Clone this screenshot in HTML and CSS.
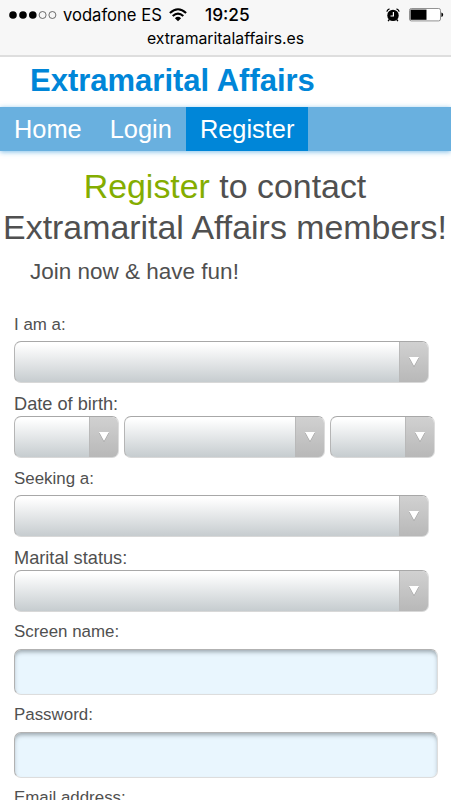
FILE: index.html
```html
<!DOCTYPE html>
<html lang="en">
<head>
<meta charset="utf-8">
<title>Extramarital Affairs</title>
<link rel="stylesheet" href="styles.css">
</head>
<body>
<div class="browser-bar">
  <div class="status">
    <svg class="signal" width="48" height="8" viewBox="0 0 48 8"><g><circle cx="4" cy="4" r="3.8"/><circle cx="14" cy="4" r="3.8"/><circle cx="23.8" cy="4" r="3.8"/></g><g fill="none" stroke="#333" stroke-width=".7"><circle cx="33.6" cy="4" r="3.5"/><circle cx="43.4" cy="4" r="3.5"/></g></svg>
    <span class="carrier">vodafone ES</span>
    <svg class="wifi" width="18" height="14" viewBox="0 0 18 14"><g fill="none" stroke="#000" stroke-width="2.1"><path d="M.9 5.1Q9-2.6 17.1 5.1"/><path d="M3.7 8.1Q9 3.2 14.3 8.1"/></g><path d="M5.9 10.2Q9 7.5 12.1 10.2L9 13.2Z"/></svg>
    <span class="time">19:25</span>
    <svg class="alarm" width="14" height="14" viewBox="0 0 14 14"><circle cx="7" cy="7.4" r="5.7"/><path d="M.8 3.6Q1.4 1.5 3.5.9M10.5.9Q12.6 1.5 13.2 3.6M3.3 11.5l-1.2 1.6M10.7 11.5l1.2 1.6" fill="none" stroke="#000" stroke-width="1.3"/><path d="M7.4 4v4H4.5" fill="none" stroke="#fff" stroke-width="1.2"/></svg>
    <svg class="battery" width="35" height="14" viewBox="0 0 35 14"><rect x=".5" y=".5" width="31" height="12.4" rx="1.8" fill="#fff" stroke="#777" stroke-width=".8"/><path d="M1.5 1.6h16v10.2h-16z"/><path d="M32.4 4.4q1.8.5 1.8 2.3t-1.8 2.3z"/></svg>
  </div>
  <div class="address">extramaritalaffairs.es</div>
</div>
<header class="brand">Extramarital Affairs</header>
<nav class="nav"><a>Home</a><a>Login</a><a class="active">Register</a></nav>
<main>
  <h1><em>Register</em> to contact<br>Extramarital Affairs members!</h1>
  <p class="intro">Join now &amp; have fun!</p>
  <form class="form">
    <div class="field"><label>I am a:</label><div class="select"><i></i></div></div>
    <div class="field tight"><label>Date of birth:</label>
      <div class="date"><div class="select"><i></i></div><div class="select"><i></i></div><div class="select"><i></i></div></div></div>
    <div class="field"><label>Seeking a:</label><div class="select"><i></i></div></div>
    <div class="field tight"><label>Marital status:</label><div class="select"><i></i></div></div>
    <div class="field entry"><label>Screen name:</label><input type="text"></div>
    <div class="field entry"><label>Password:</label><input type="password"></div>
    <div class="field"><label>Email address:</label></div>
  </form>
</main>
</body>
</html>
```
FILE: styles.css
```css
* { box-sizing: border-box; }
html { height: 800px; overflow: hidden; }
body { margin: 0; width: 451px; height: 800px; overflow: hidden; background: #fff; color: #505050; font-family: "Liberation Sans", Arial, sans-serif; }
.browser-bar { height: 57px; background: #f7f7f7; border-bottom: 2px solid #dedede; color: #000; font-family: Inter, sans-serif; }
.status { display: flex; align-items: center; height: 29px; padding-left: 9px; white-space: nowrap; }
.status svg { flex: none; }
.carrier { width: 101px; margin-left: 6px; font-size: 16.6px; }
.wifi { margin-left: 5px; }
.time { width: 47px; margin-left: 18px; font-size: 17.3px; font-weight: 500; }
.alarm { margin-left: 134px; }
.battery { margin-left: 9px; }
.address { height: 20px; line-height: 20px; text-align: center; font-size: 15.8px; }
.brand { height: 50px; padding-left: 30px; line-height: 47px; font-size: 31px; font-weight: bold; color: #0086d8; }
.nav { display: flex; height: 44px; background: #69b0df; box-shadow: 0 1px 5px rgba(60, 155, 220, .65); margin-bottom: 15px; }
.nav a { padding: 0 14px; line-height: 44px; font-size: 25.4px; color: #fff; }
.nav .active { background: #0086d8; }
h1 { margin: 0 0 0 -1px; line-height: 41px; font-size: 33.9px; font-weight: normal; text-align: center; white-space: nowrap; }
h1 em { font-style: normal; color: #84ad00; }
.intro { margin: 11px 0 0; padding-left: 30px; line-height: 26px; font-size: 22.5px; }
.form { padding: 30px 14px 0; }
.field label { display: block; height: 26px; line-height: 20px; font-size: 16.9px; white-space: nowrap; }
.field .select { margin-bottom: 11px; }
.field.tight label { height: 22px; font-size: 18.2px; line-height: 21px; }
.field.tight > .select { margin-bottom: 10px; }
.select { display: flex; justify-content: flex-end; width: 415px; height: 42px; border: 1px solid #b5b5b5; border-top-color: #a8a8a8; border-right-color: #dcdcdc; border-bottom-color: #d8d8d8; border-radius: 7px; background: linear-gradient(#fff 5%, #c6cccf); overflow: hidden; }
.select i { display: flex; align-items: center; justify-content: center; width: 29px; padding: 0 1px 2px 0; border-left: 1px solid #b9b9b9; background: linear-gradient(#d1d1d1, #b8b8b8); }
.select i::before { content: ""; border: 5px solid transparent; border-top: 9px solid #fff; border-bottom: 0; filter: drop-shadow(0 1px 0 #999); }
.date { display: grid; grid-template-columns: 105px 201px 105px; gap: 5px; }
.date .select { width: auto; }
.entry label { height: 27px; }
input { display: block; width: 424px; height: 46px; margin: 0 0 10px; border: 1px solid #b2b2b2; border-right-color: #ddd; border-bottom-color: #ddd; border-radius: 7px; background: #e9f6fe; box-shadow: inset 0 3px 4px -1px rgba(80, 90, 95, .5); }
```
